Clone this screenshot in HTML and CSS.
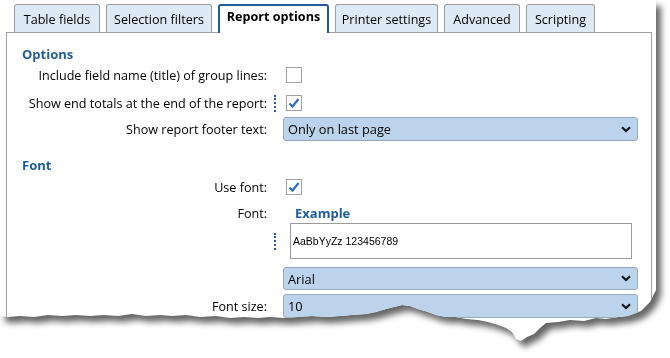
FILE: index.html
```html
<!DOCTYPE html>
<html lang="en">
<head>
    <meta charset="UTF-8">
    <title>Report options</title>
    <link rel="stylesheet" href="styles.css">
</head>
<body>
    <div class="frame">
        <div class="sheet">
            <div class="tabs">
                <div class="tab tab-table">Table fields</div>
                <div class="tab tab-filters">Selection filters</div>
                <div class="tab tab-report active">Report options</div>
                <div class="tab tab-printer">Printer settings</div>
                <div class="tab tab-advanced">Advanced</div>
                <div class="tab tab-scripting">Scripting</div>
            </div>

            <div class="panel">
                <div class="section-title">Options</div>

                <div class="row row-check">
                    <label>Include field name (title) of group lines:</label>
                    <span class="mark"></span>
                    <span class="check"></span>
                </div>
                <div class="row row-check row-totals">
                    <label>Show end totals at the end of the report:</label>
                    <span class="mark"><i class="dots"></i></span>
                    <span class="check checked">
                        <svg width="14" height="14" viewBox="0 0 14 14"><path d="M2.5 7.5 L5.5 10.5 L11.5 3" fill="none" stroke="#2f6fc0" stroke-width="2.2"/></svg>
                    </span>
                </div>
                <div class="row row-select row-footer">
                    <label>Show report footer text:</label>
                    <span class="mark"></span>
                    <div class="select">
                        <span>Only on last page</span>
                        <svg width="10" height="7" viewBox="0 0 10 7"><path d="M1 1.2 L5 5 L9 1.2" fill="none" stroke="#151515" stroke-width="2.2"/></svg>
                    </div>
                </div>

                <div class="section-title section-font">Font</div>

                <div class="row row-check row-usefont">
                    <label>Use font:</label>
                    <span class="mark"></span>
                    <span class="check checked">
                        <svg width="14" height="14" viewBox="0 0 14 14"><path d="M2.5 7.5 L5.5 10.5 L11.5 3" fill="none" stroke="#2f6fc0" stroke-width="2.2"/></svg>
                    </span>
                </div>
                <div class="row row-fontlabel">
                    <label>Font:</label>
                    <span class="mark"></span>
                    <span class="example-title">Example</span>
                </div>
                <div class="row row-example">
                    <label></label>
                    <span class="mark"><i class="dots"></i></span>
                    <div class="example-box">AaBbYyZz 123456789</div>
                </div>
                <div class="row row-select row-face">
                    <label></label>
                    <span class="mark"></span>
                    <div class="select">
                        <span>Arial</span>
                        <svg width="10" height="7" viewBox="0 0 10 7"><path d="M1 1.2 L5 5 L9 1.2" fill="none" stroke="#151515" stroke-width="2.2"/></svg>
                    </div>
                </div>
                <div class="row row-select row-size">
                    <label>Font size:</label>
                    <span class="mark"></span>
                    <div class="select">
                        <span>10</span>
                        <svg width="10" height="7" viewBox="0 0 10 7"><path d="M1 1.2 L5 5 L9 1.2" fill="none" stroke="#151515" stroke-width="2.2"/></svg>
                    </div>
                </div>
            </div>
        </div>
    </div>
</body>
</html>
```

FILE: styles.css
```css
:root {
    --tab-bg: #dde9f5;
    --tab-border: #9c9c9c;
    --active: #1f5c99;
    --heading: #1f5c99;
    --select-bg: #bcd4eb;
    --select-border: #97a9bd;
    --text: #000;
}

body {
    margin: 0;
    background: #fff;
    font-family: 'Open Sans', 'Noto Sans', sans-serif;
    font-size: 12.6px;
    color: var(--text);
}

.frame {
    width: 670px;
    height: 358px;
    filter: drop-shadow(5px 6px 3px rgba(0, 0, 0, 0.6));
}

.sheet {
    width: 656px;
    height: 350px;
    background: #fff;
    padding-top: 4px;
    box-sizing: border-box;
    overflow: hidden;
    clip-path: polygon(0 0, 656px 0, 656px 290px, 653px 296px, 650px 302px, 646px 306px, 641px 311px,
        636px 313px, 628px 316px, 618px 317px, 606px 319px, 596px 318px, 584px 321px, 570px 320px,
        558px 322px, 546px 323px, 540px 328px, 534px 334px, 527px 337px, 521px 341px, 516px 339px,
        512px 332px, 506px 328px, 498px 325px, 488px 322px, 478px 320px, 466px 319px, 456px 317px,
        446px 317px, 436px 315px, 428px 312px, 418px 309px, 410px 306px, 402px 305px, 394px 307px,
        386px 309px, 376px 312px, 366px 314px, 352px 315px, 340px 316px, 326px 317px, 312px 316px,
        298px 317px, 284px 318px, 270px 317px, 258px 318px, 244px 317px, 230px 318px, 216px 316px,
        200px 317px, 186px 315px, 172px 316px, 160px 315px, 146px 316px, 132px 314px, 118px 316px,
        104px 315px, 90px 316px, 76px 315px, 62px 316px, 48px 315px, 34px 317px, 20px 316px,
        8px 317px, 0 316px);
}

/* tabs */

.tabs {
    display: flex;
    align-items: flex-end;
    gap: 6px;
    margin-left: 14px;
    height: 28px;
    position: relative;
    z-index: 2;
}

.tab {
    height: 28px;
    box-sizing: border-box;
    background: var(--tab-bg);
    border: 1px solid var(--tab-border);
    border-bottom: none;
    border-radius: 3px 3px 0 0;
    text-align: center;
    line-height: 30px;
    white-space: nowrap;
}

.tab.active {
    height: 29px;
    margin-bottom: -1px;
    background: #fff;
    border: 2px solid var(--active);
    border-bottom: none;
    font-weight: bold;
    line-height: 22px;
}

.tab-table { width: 86px; }
.tab-filters { width: 106px; }
.tab-report { width: 111px; }
.tab-printer { width: 103px; }
.tab-advanced { width: 76px; }
.tab-scripting { width: 69px; }

/* panel */

.panel {
    margin-left: 6px;
    width: 646px;
    height: 330px;
    box-sizing: border-box;
    border: 1px solid #a0a0a0;
    padding-top: 12px;
}

.section-title {
    height: 18px;
    line-height: 18px;
    padding-left: 15px;
    color: var(--heading);
    font-weight: bold;
    font-size: 13px;
}

.section-font {
    margin-top: 15px;
}

.row {
    display: grid;
    grid-template-columns: 260px 16px 355px;
    align-items: center;
}

.row label {
    text-align: right;
    white-space: nowrap;
}

.mark {
    display: flex;
    justify-content: center;
}

.dots {
    display: block;
    width: 0;
    height: 17px;
    border-left: 2px dotted var(--heading);
}

.row-check { height: 24px; }
.row-totals { margin-top: 4px; }
.row-footer { margin-top: 2px; }
.row-usefont { margin-top: 1px; }

.check {
    width: 16px;
    height: 16px;
    box-sizing: border-box;
    margin-left: 3px;
    border: 1px solid #a2a2a2;
    background: #fff;
    display: flex;
    align-items: center;
    justify-content: center;
}

.row-select { height: 24px; }

.select {
    height: 24px;
    box-sizing: border-box;
    background: var(--select-bg);
    border: 1px solid var(--select-border);
    border-radius: 3px;
    display: flex;
    align-items: center;
    justify-content: space-between;
    padding: 0 6px 0 4px;
    font-size: 12.8px;
}

.row-fontlabel {
    height: 20px;
    margin-top: 4px;
}

.example-title {
    margin-left: 12px;
    color: var(--heading);
    font-weight: bold;
    font-size: 13px;
}

.row-example { height: 36px; }

.example-box {
    margin-left: 7px;
    width: 342px;
    height: 36px;
    box-sizing: border-box;
    border: 1px solid #9a9a9a;
    background: #fff;
    padding-left: 2px;
    line-height: 34px;
    font-family: 'Liberation Sans', Arial, sans-serif;
    font-size: 10.5px;
    color: #000;
}

.row-face {
    margin-top: 8px;
    height: 23px;
}

.row-face .select { height: 23px; }

.row-size { margin-top: 4px; }
```
